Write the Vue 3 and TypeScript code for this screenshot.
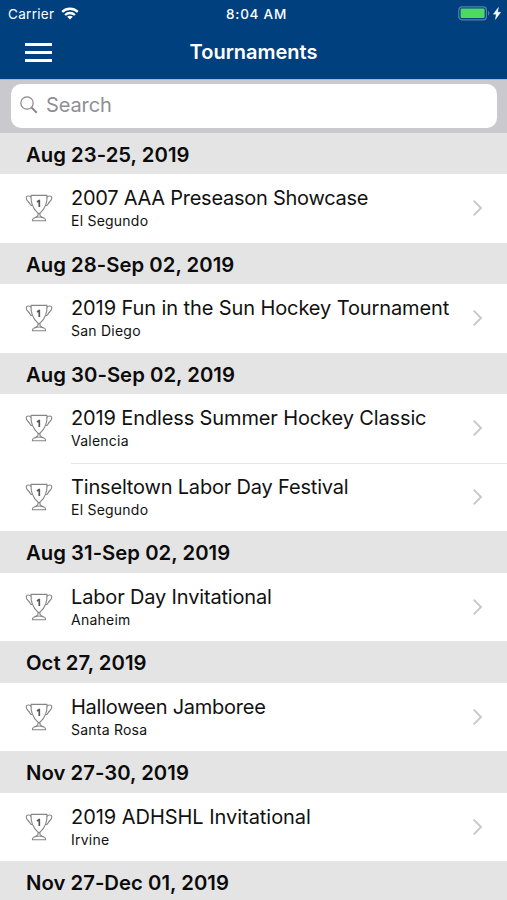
<script setup lang="ts">
interface Tournament {
  name: string
  city: string
  tracking: number
}

interface Section {
  dates: string
  items: Tournament[]
}

const sections: Section[] = [
  { dates: 'Aug 23-25, 2019', items: [{ name: '2007 AAA Preseason Showcase', city: 'El Segundo', tracking: -0.26 }] },
  { dates: 'Aug 28-Sep 02, 2019', items: [{ name: '2019 Fun in the Sun Hockey Tournament', city: 'San Diego', tracking: -0.1 }] },
  {
    dates: 'Aug 30-Sep 02, 2019',
    items: [
      { name: '2019 Endless Summer Hockey Classic', city: 'Valencia', tracking: -0.13 },
      { name: 'Tinseltown Labor Day Festival', city: 'El Segundo', tracking: -0.18 },
    ],
  },
  { dates: 'Aug 31-Sep 02, 2019', items: [{ name: 'Labor Day Invitational', city: 'Anaheim', tracking: -0.16 }] },
  { dates: 'Oct 27, 2019', items: [{ name: 'Halloween Jamboree', city: 'Santa Rosa', tracking: -0.25 }] },
  { dates: 'Nov 27-30, 2019', items: [{ name: '2019 ADHSHL Invitational', city: 'Irvine', tracking: -0.04 }] },
  { dates: 'Nov 27-Dec 01, 2019', items: [] },
]
</script>

<template>
  <div class="screen">
    <header class="top">
      <div class="status">
        <div class="carrier">
          <span>Carrier</span>
          <svg class="wifi" width="18" height="13" viewBox="0 0 18 13" fill="none" stroke="#fff" stroke-width="2.3">
            <path d="M1.2 4.9C5.6.7 12.4.7 16.8 4.9" />
            <path d="M4.1 8C6.9 5.3 11.1 5.3 13.9 8" />
            <path d="M9 12.4 6.2 9.7C7.8 8.3 10.2 8.3 11.8 9.7Z" fill="#fff" stroke="none" />
          </svg>
        </div>
        <span class="clock">8:04 AM</span>
        <div class="power">
          <svg width="32" height="15" viewBox="0 0 32 15">
            <rect x=".8" y=".8" width="27.6" height="13" rx="3" fill="none" stroke="#5680a8" stroke-width="1.2" />
            <rect x="2.6" y="2.6" width="24" height="9.4" rx="1" fill="#4cd964" />
            <path d="M30 5c1.8.6 1.8 4 0 4.6Z" fill="#5680a8" />
          </svg>
          <svg width="8" height="13" viewBox="0 0 8 13"><path d="M5.4.4.3 7.2h3L2.4 12.4 7.7 5.3H4.6Z" fill="#fff" stroke="#fff" stroke-width=".4" /></svg>
        </div>
      </div>
      <div class="nav">
        <button class="menu" aria-label="Menu"><i /><i /><i /></button>
        <h1>Tournaments</h1>
        <span />
      </div>
    </header>

    <div class="search">
      <label class="field">
        <svg width="18" height="18" viewBox="0 0 18 18" fill="none" stroke="#88888c">
          <circle cx="7" cy="7" r="6.2" stroke-width="1.2" />
          <path d="m11.5 11.5 5.3 5.2" stroke-width="1.9" />
        </svg>
        <span>Search</span>
      </label>
    </div>

    <main>
      <section v-for="section in sections" :key="section.dates">
        <h2>{{ section.dates }}</h2>
        <article v-for="item in section.items" :key="item.name" class="row">
          <svg class="trophy" width="28" height="28" viewBox="0 0 28 28" fill="none" stroke="#858585" stroke-width="1.1" stroke-linejoin="round">
            <path d="M6 1.4h16c.3 7.4-1.8 12.9-6.500 17.2L14 20l-1.5-1.4C7.8 14.3 5.7 8.8 6 1.4Z" />
            <path d="M6 3.6C5.1 1.6 1.4 1.2 1.2 3.800c-.2 2.900 2.900 4 3.800 6.200.6 1.300 1.300 1.900 2.500 1.400M22 3.600c.9-2 4.600-2.400 4.800.2.2 2.900-2.900 4-3.800 6.200-.6 1.300-1.300 1.900-2.500 1.400" />
            <path d="M13 19.500v1.800c-.4 1.300-2.300 1.800-4.600 3.200M15 19.500v1.800c.4 1.300 2.300 1.800 4.600 3.200" />
            <path d="M10 23.700c2.300-.8 5.700-.8 8 0M8.400 24.500c-.8.400-1 1.300-1 2.200h13.200c0-.9-.2-1.800-1-2.200" />
            <path d="m12 8 2.300-1.500v6.500" stroke="#555" stroke-width="1.700" />
          </svg>
          <div class="body">
            <div class="copy">
              <div class="name" :style="{ letterSpacing: `${item.tracking}px` }">{{ item.name }}</div>
              <div class="city">{{ item.city }}</div>
            </div>
            <svg class="chevron" width="11" height="18" viewBox="0 0 11 18" fill="none" stroke="#c7c7cc" stroke-width="1.900"><path d="m1.700 1.700 7.300 7.300-7.300 7.300" /></svg>
          </div>
        </article>
      </section>
    </main>
  </div>
</template>

<style>
body {
  background: #fff;
}
</style>

<style scoped>
.screen {
  width: 507px;
  height: 900px;
  overflow: hidden;
  background: #fff;
  color: #111;
  font-family: Inter, 'Liberation Sans', sans-serif;
}
.top {
  box-sizing: border-box;
  height: 79px;
  background: #00407f;
  color: #fff;
}
.status {
  display: grid;
  grid-template-columns: 1fr auto 1fr;
  align-items: center;
  height: 27px;
  padding: 0 6px 0 8px;
  font-size: 13px;
}
.carrier,
.power {
  display: flex;
  align-items: center;
}
.carrier {
  gap: 7px;
  font-size: 13.5px;
  letter-spacing: 0.3px;
}
.clock {
  padding-left: 4px;
  font-weight: 500;
  font-size: 13.5px;
  letter-spacing: 0.75px;
}
.power {
  justify-content: flex-end;
  gap: 3px;
}
.nav {
  display: grid;
  grid-template-columns: 1fr auto 1fr;
  align-items: center;
  height: 50px;
  padding: 0 25px;
}
.menu {
  display: flex;
  flex-direction: column;
  gap: 5px;
  width: 27px;
  padding: 0;
  border: 0;
  background: none;
}
.menu i {
  height: 3px;
  background: #fff;
}
h1,
h2 {
  margin: 0;
  font-weight: 600;
}
h1 {
  font-size: 20px;
}
.search {
  box-sizing: border-box;
  height: 53.5px;
  padding: 4px 10px 5px 11px;
  background: #c9c9ce;
  border-top: 1px solid #a6b8cb;
}
.field {
  display: flex;
  align-items: center;
  gap: 8px;
  box-sizing: border-box;
  height: 44px;
  padding: 0 0 2px 9px;
  border-radius: 10px;
  background: #fff;
  color: #8e8e93;
  font-size: 20px;
  letter-spacing: -0.1px;
}
h2 {
  box-sizing: border-box;
  height: 41.5px;
  padding-left: 26px;
  background: #e4e4e4;
  color: #0b0b0b;
  font-size: 20.3px;
  letter-spacing: 0.03px;
  line-height: 44px;
}
.row {
  display: flex;
  align-items: center;
  height: 68.5px;
  padding-left: 25px;
}
.trophy {
  flex: none;
  margin-right: 18px;
}
.body {
  box-sizing: border-box;
  display: flex;
  flex: 1;
  align-items: center;
  justify-content: space-between;
  height: 100%;
  padding-right: 24px;
}
.row + .row .body {
  border-top: 1px solid #e6e6e8;
}
.name {
  font-size: 20px;
  line-height: 26px;
  white-space: nowrap;
}
.city {
  font-size: 14px;
  letter-spacing: 0.23px;
  line-height: 20px;
}
</style>
